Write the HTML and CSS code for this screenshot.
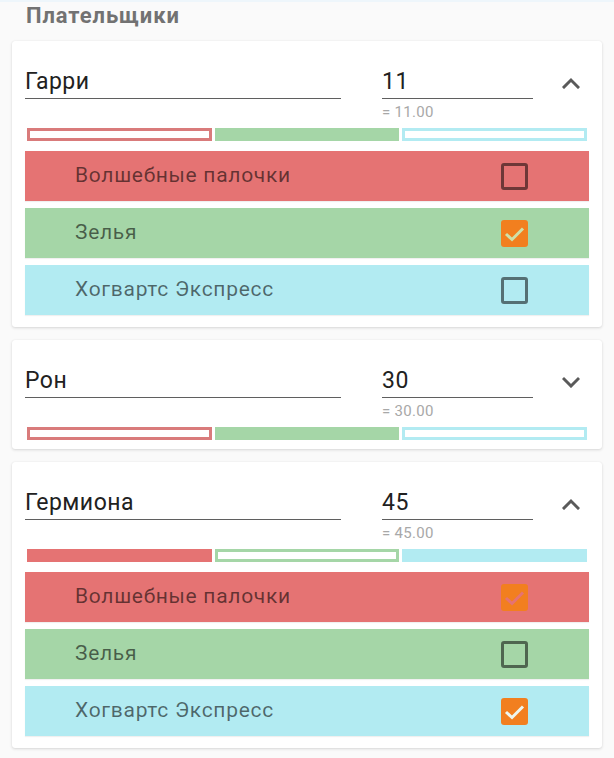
FILE: index.html
```html
<!DOCTYPE html>
<html lang="ru">
<head>
<meta charset="utf-8">
<title>Плательщики</title>
<link rel="stylesheet" href="styles.css">
</head>
<body>
<div class="topline"></div>
<h1 class="title">Плательщики</h1>

<section class="card">
  <div class="head">
    <div class="field name"><span class="value">Гарри</span></div>
    <div class="amount">
      <div class="field"><span class="value">11</span></div>
      <div class="hint">= 11.00</div>
    </div>
    <svg class="chev" viewBox="0 0 18 12" width="18" height="12"><polyline points="2,10 9,3 16,10"/></svg>
  </div>
  <div class="bars">
    <div class="bar red hollow"></div>
    <div class="bar green"></div>
    <div class="bar blue hollow"></div>
  </div>
  <div class="rows">
    <div class="row red"><span class="label">Волшебные палочки</span><span class="box"></span></div>
    <div class="row green"><span class="label">Зелья</span><span class="box checked"><svg viewBox="0 0 27 27" width="27" height="27"><polyline points="5,14 11,19.5 22,8.5"/></svg></span></div>
    <div class="row blue"><span class="label">Хогвартс Экспресс</span><span class="box"></span></div>
  </div>
</section>

<section class="card">
  <div class="head">
    <div class="field name"><span class="value">Рон</span></div>
    <div class="amount">
      <div class="field"><span class="value">30</span></div>
      <div class="hint">= 30.00</div>
    </div>
    <svg class="chev" viewBox="0 0 18 12" width="18" height="12"><polyline points="2,3 9,10 16,3"/></svg>
  </div>
  <div class="bars">
    <div class="bar red hollow"></div>
    <div class="bar green"></div>
    <div class="bar blue hollow"></div>
  </div>
</section>

<section class="card">
  <div class="head">
    <div class="field name"><span class="value">Гермиона</span></div>
    <div class="amount">
      <div class="field"><span class="value">45</span></div>
      <div class="hint">= 45.00</div>
    </div>
    <svg class="chev" viewBox="0 0 18 12" width="18" height="12"><polyline points="2,10 9,3 16,10"/></svg>
  </div>
  <div class="bars">
    <div class="bar red"></div>
    <div class="bar green hollow"></div>
    <div class="bar blue"></div>
  </div>
  <div class="rows">
    <div class="row red"><span class="label">Волшебные палочки</span><span class="box checked"><svg viewBox="0 0 27 27" width="27" height="27"><polyline points="5,14 11,19.5 22,8.5"/></svg></span></div>
    <div class="row green"><span class="label">Зелья</span><span class="box"></span></div>
    <div class="row blue"><span class="label">Хогвартс Экспресс</span><span class="box checked"><svg viewBox="0 0 27 27" width="27" height="27"><polyline points="5,14 11,19.5 22,8.5"/></svg></span></div>
  </div>
</section>
</body>
</html>
```
FILE: styles.css
```css
* { box-sizing: border-box; }
html, body { margin: 0; padding: 0; }
body {
  background: #fafafa;
  font-family: Roboto, "Noto Sans", "Liberation Sans", sans-serif;
  color: #212121;
  width: 614px;
  overflow: hidden;
}
.topline { height: 2px; background: #eef6fb; }
.title {
  margin: 0;
  padding: 0 26px;
  font-size: 22px;
  letter-spacing: 0.9px;
  line-height: 27px;
  font-weight: 700;
  color: #727272;
  height: 39px;
}
.card {
  margin: 0 12px 13px;
  background: #fff;
  border-radius: 3px;
  box-shadow: 0 1px 3px rgba(0,0,0,0.14), 0 0 1px rgba(0,0,0,0.08);
  padding: 0 13px 9px;
}
.head {
  display: flex;
  align-items: flex-start;
}
.field {
  padding-top: 26px;
  border-bottom: 1.5px solid #5f5f5f;
  height: 58px;
}
.value {
  display: block;
  font-size: 23px;
  letter-spacing: 0.5px;
  line-height: 29px;
  color: #212121;
}
.name { width: 316px; }
.amount { width: 151px; margin-left: 41px; }
.hint {
  margin-top: 5px;
  font-size: 15px;
  letter-spacing: 0.3px;
  line-height: 17px;
  color: #a8a8a8;
}
.chev {
  margin-left: 29px;
  margin-top: 36px;
  fill: none;
  stroke: #5a5a5a;
  stroke-width: 3;
  stroke-linecap: square;
}
.bars {
  display: grid;
  grid-template-columns: 1fr 1fr 1fr;
  gap: 3px;
  margin: 7px 2px 0;
}
.bar { height: 13px; }
.bar.red { background: #e57373; }
.bar.green { background: #a5d6a7; }
.bar.blue { background: #b2ebf2; }
.bar.hollow { background: #fff; border: 3px solid; }
.bar.red.hollow { border-color: #d97b7b; }
.bar.green.hollow { border-color: #a5d6a7; }
.bar.blue.hollow { border-color: #b2ebf2; }
.rows {
  display: flex;
  flex-direction: column;
  gap: 7px;
  margin-top: 10px;
  padding-bottom: 3px;
}
.row {
  height: 50px;
  display: flex;
  align-items: center;
  padding-left: 50px;
  padding-right: 61px;
  box-shadow: 0 1px 1px rgba(0,0,0,0.06);
}
.row.red { background: #e57373; --bg: #e57373; }
.row.green { background: #a5d6a7; --bg: #cfe0a8; }
.row.blue { background: #b2ebf2; --bg: #eef6ee; }
.label {
  font-size: 21px;
  letter-spacing: 0.7px;
  color: rgba(0,0,0,0.56);
  margin-top: -3px;
}
.box {
  margin-left: auto;
  width: 27px;
  height: 27px;
  border: 3px solid rgba(0,0,0,0.52);
  border-radius: 3px;
}
.box.checked {
  border: none;
  background: #f27f1f;
}
.box svg { display: block; }
.box polyline {
  fill: none;
  stroke: var(--bg);
  stroke-width: 3;
}
```
